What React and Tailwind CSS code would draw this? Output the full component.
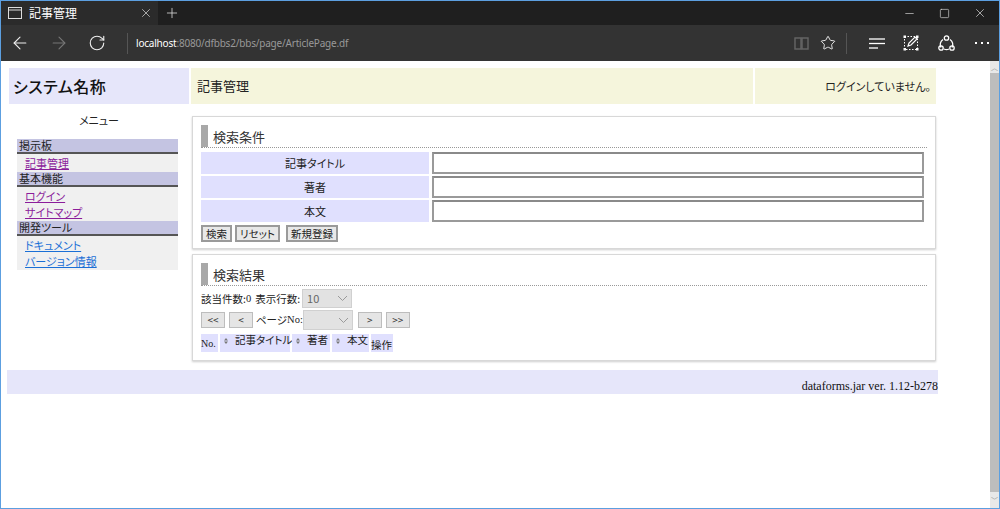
import React from 'react'
import {ArrowLeft, ArrowRight, RotateCw, Star, Minus, Square, X, Plus} from 'lucide-react'

const jp = {fontFamily: '"Noto Sans CJK JP", "Noto Sans", sans-serif'}
const serif = {fontFamily: '"Liberation Serif", serif'}

function Chevron() {
	return (
		<svg width="11" height="7" viewBox="0 0 11 7" className="ml-auto mr-[3px]">
			<path d="M1 1l4.5 4.5L10 1" fill="none" stroke="#9a9a9a" strokeWidth="1" />
		</svg>
	)
}

function SortIcon() {
	return (
		<svg width="4" height="6" viewBox="0 0 4 6" className="ml-[4px] mr-[7px] mt-[4px] shrink-0">
			<path d="M2 0L4 2.4H0z M2 6L4 3.6H0z" fill="#777" />
		</svg>
	)
}

function TitleBar() {
	return (
		<div className="flex h-[24px] bg-[#1f1f1f] text-white">
			<div className="flex items-center w-[157px] bg-[#2b2b2b] pl-[7px]">
				<svg width="14" height="12" viewBox="0 0 14 12">
					<rect x="0.5" y="0.5" width="13" height="11" fill="none" stroke="#ddd" />
					<line x1="0.5" y1="3" x2="13.5" y2="3" stroke="#ddd" />
				</svg>
				<span className="ml-[7px] text-[12px]" style={jp}>記事管理</span>
				<X size={14} strokeWidth={1.2} className="ml-auto mr-[5px] text-[#ddd]" />
			</div>
			<div className="flex items-center pl-[6px]">
				<Plus size={16} strokeWidth={1.2} className="text-[#ddd]" />
			</div>
			<div className="ml-auto flex items-center gap-[23px] pr-[12px] text-[#ddd]">
				<Minus size={13} strokeWidth={1.2} />
				<Square size={11} strokeWidth={1.4} />
				<X size={14} strokeWidth={1.2} />
			</div>
		</div>
	)
}

function ToolBar() {
	return (
		<div className="flex items-center h-[36px] bg-[#333333] text-white">
			<ArrowLeft size={20} strokeWidth={1.3} className="ml-[9px] text-[#eee]" />
			<ArrowRight size={20} strokeWidth={1.3} className="ml-[19px] text-[#777]" />
			<RotateCw size={18} strokeWidth={1.5} className="ml-[19px] text-[#eee]" />
			<div className="ml-[21px] w-px h-[21px] bg-[#555]" />
			<div className="ml-[8px] text-[10px] tracking-[-0.2px]" style={{fontFamily: '"Noto Sans", sans-serif'}}>
				<span className="text-white">localhost</span>
				<span className="text-[#999]">:8080/dfbbs2/bbs/page/ArticlePage.df</span>
			</div>
			<div className="ml-auto flex items-center pr-[10px]">
				<svg width="15" height="13" viewBox="0 0 15 13" className="mr-[11px]">
					<rect x="1" y="1" width="6" height="11" fill="none" stroke="#666" strokeWidth="1.4" />
					<rect x="8" y="1" width="6" height="11" fill="none" stroke="#666" strokeWidth="1.4" />
				</svg>
				<Star size={16} strokeWidth={1.3} className="text-white" />
				<div className="ml-[10px] w-px h-[21px] bg-[#555]" />
				<svg width="16" height="11" viewBox="0 0 16 11" className="ml-[22px]">
					<line x1="0" y1="1" x2="16" y2="1" stroke="#fff" strokeWidth="1.3" />
					<line x1="0" y1="5.5" x2="16" y2="5.5" stroke="#fff" strokeWidth="1.3" />
					<line x1="0" y1="10" x2="9" y2="10" stroke="#fff" strokeWidth="1.3" />
				</svg>
				<svg width="16" height="16" viewBox="0 0 16 16" className="ml-[18px]">
					<rect x="1.5" y="1.5" width="13" height="13" fill="none" stroke="#fff" strokeWidth="1" strokeDasharray="1.5 1.5" />
					<rect x="0.5" y="0.5" width="2.5" height="2.5" fill="#fff" />
					<rect x="13" y="0.5" width="2.5" height="2.5" fill="#fff" />
					<rect x="0.5" y="13" width="2.5" height="2.5" fill="#fff" />
					<rect x="13" y="13" width="2.5" height="2.5" fill="#fff" />
					<path d="M5 11l1-3 6-6 2 2-6 6z" fill="none" stroke="#fff" strokeWidth="1.2" />
				</svg>
				<svg width="17" height="16" viewBox="0 0 17 16" className="ml-[19px]">
					<path d="M5 4.5 A6 6 0 0 0 3 12.5 M6 14 A6 6 0 0 0 11 14 M14 12.5 A6 6 0 0 0 12 4.5" fill="none" stroke="#fff" strokeWidth="1.3" />
					<circle cx="8.5" cy="3" r="2.2" fill="none" stroke="#fff" strokeWidth="1.3" />
					<circle cx="3" cy="13" r="2.2" fill="none" stroke="#fff" strokeWidth="1.3" />
					<circle cx="14" cy="13" r="2.2" fill="none" stroke="#fff" strokeWidth="1.3" />
				</svg>
				<div className="ml-[20px] flex gap-[4px]">
					<span className="w-[2px] h-[2px] bg-white" />
					<span className="w-[2px] h-[2px] bg-white" />
					<span className="w-[2px] h-[2px] bg-white" />
				</div>
			</div>
		</div>
	)
}

function MenuGroup({title, items}) {
	return (
		<div>
			<div className="h-[15px] bg-[#c4c4e2] border-b-2 border-[#555] pl-[2px] text-[11px] leading-[13px] text-[#222]">{title}</div>
			<div className="bg-[#f0f0f0] py-[1px]">
				{items.map((it) => (
					<div key={it.label} className={`h-[16px] leading-[16px] pl-[8px] text-[11px] underline ${it.color}`}>
						{it.label}
					</div>
				))}
			</div>
		</div>
	)
}

function Panel({title, children, className}) {
	return (
		<div className={`bg-white border border-[#d8d8d8] shadow-[0_1px_2px_rgba(0,0,0,0.2)] px-[8px] pt-[8px] ${className}`}>
			<div className="flex items-stretch h-[23px] border-b border-dotted border-[#999]">
				<div className="w-[7px] bg-[#a8a8a8]" />
				<div className="ml-[5px] text-[13px] leading-[23px] text-[#333]">{title}</div>
			</div>
			{children}
		</div>
	)
}

function FormRow({label}) {
	return (
		<div className="flex h-[22px] gap-[3px]">
			<div className="w-[228px] bg-[#e0e0fe] flex items-center justify-center text-[11px] text-[#222]">{label}</div>
			<div className="w-[492px] border-2 border-[#9a9a9a] border-t-[#8a8a8a] bg-white" />
		</div>
	)
}

function Btn({children, className}) {
	return (
		<div className={`h-[17px] px-[3px] border-2 border-[#9a9a9a] bg-[#e8e8e8] text-[10.5px] leading-[13px] text-[#222] ${className}`}>{children}</div>
	)
}

function PagerBtn({children}) {
	return (
		<div className="w-[24px] h-[16px] border border-[#bdbdbd] bg-[#e5e5e5] text-[10px] leading-[14px] text-center text-[#333]">{children}</div>
	)
}

export default function App() {
	return (
		<div className="w-[1000px] h-[509px] flex flex-col border border-[#5c9fe0] overflow-hidden bg-white [font-feature-settings:'palt']" style={jp}>
			<TitleBar />
			<ToolBar />
			<div className="flex flex-1 min-h-0">
				<div className="flex-1 pt-[7px] pl-[6px]">
					{/* ヘッダ */}
					<div className="ml-[2px] flex gap-[2px] h-[36px]">
						<div className="w-[180px] bg-[#e6e6fa] flex items-center pl-[4px] text-[16px] font-medium tracking-[0.5px] text-[#111]">システム名称</div>
						<div className="w-[562px] bg-[#f5f5dc] flex items-center pl-[6px] text-[13px] text-[#222]">記事管理</div>
						<div className="w-[181px] bg-[#f5f5dc] flex items-center justify-end pr-[5px] text-[11px] text-[#222]">ログインしていません。</div>
					</div>
					<div className="ml-[2px] flex gap-[3px]">
						{/* メニュー */}
						<div className="w-[180px]">
							<div className="text-center text-[11px] text-[#222] pt-[8px] h-[35px]">メニュー</div>
							<div className="ml-[8px] w-[161px]">
								<MenuGroup title="掲示板" items={[{label: '記事管理', color: 'text-[#8b1d9b]'}]} />
								<MenuGroup title="基本機能" items={[{label: 'ログイン', color: 'text-[#8b1d9b]'}, {label: 'サイトマップ', color: 'text-[#8b1d9b]'}]} />
								<MenuGroup title="開発ツール" items={[{label: 'ドキュメント', color: 'text-[#1a6fd6]'}, {label: 'バージョン情報', color: 'text-[#1a6fd6]'}]} />
							</div>
						</div>
						{/* メイン */}
						<div className="w-[744px] pt-[12px]">
							<Panel title="検索条件" className="h-[133px]">
								<div className="mt-[4px] flex flex-col gap-[2px]">
									<FormRow label="記事タイトル" />
									<FormRow label="著者" />
									<FormRow label="本文" />
								</div>
								<div className="mt-[3px] flex">
									<Btn>検索</Btn>
									<Btn className="ml-[3px]">リセット</Btn>
									<Btn className="ml-[6px]">新規登録</Btn>
								</div>
							</Panel>
							<Panel title="検索結果" className="mt-[5px] h-[107px]">
								<div className="mt-[3px] flex items-center h-[19px] text-[10.5px] text-[#222]">
									<span>該当件数:</span>
									<span style={serif}>0</span>
									<span className="ml-[4px]">表示行数:</span>
									<div className="ml-[2px] w-[50px] h-[19px] bg-[#e2e2e2] border border-[#d0d0d0] flex items-center pl-[4px] text-[11px] text-[#666]">
										10
										<Chevron />
									</div>
								</div>
								<div className="mt-[2px] flex items-center h-[20px] text-[10.5px] text-[#222]">
									<PagerBtn>&lt;&lt;</PagerBtn>
									<div className="ml-[4px]"><PagerBtn>&lt;</PagerBtn></div>
									<span className="ml-[3px]">ページ</span>
									<span style={serif}>No:</span>
									<div className="w-[50px] h-[20px] bg-[#e2e2e2] border border-[#d0d0d0] flex items-center">
										<Chevron />
									</div>
									<div className="ml-[5px]"><PagerBtn>&gt;</PagerBtn></div>
									<div className="ml-[4px]"><PagerBtn>&gt;&gt;</PagerBtn></div>
								</div>
								<div className="mt-[4px] flex gap-[2px] h-[18px] text-[10.5px] text-[#222] whitespace-nowrap">
									<div className="w-[17px] bg-[#e0e0fe] flex items-end pb-[1px] text-[10px]" style={serif}>No.</div>
									<div className="w-[70px] bg-[#e0e0fe] flex items-start leading-[12px]"><SortIcon />記事タイトル</div>
									<div className="w-[38px] bg-[#e0e0fe] flex items-start leading-[12px]"><SortIcon />著者</div>
									<div className="w-[37px] bg-[#e0e0fe] flex items-start leading-[12px]"><SortIcon />本文</div>
									<div className="w-[22px] bg-[#e0e0fe] flex items-end leading-[14px]">操作</div>
								</div>
							</Panel>
						</div>
					</div>
					{/* フッタ */}
					<div className="mt-[9px] w-[931px] h-[24px] bg-[#e6e6fa] flex items-end justify-end text-[12px] leading-[15px] text-[#111]" style={serif}>
						dataforms.jar ver. 1.12-b278
					</div>
				</div>
				{/* スクロールバー */}
				<div className="w-[9px] flex flex-col bg-[#e8e8e8]">
					<div className="h-[12px] flex items-center justify-center text-[7px] text-[#999]">︿</div>
					<div className="flex-1 bg-[#bdbdbd]" />
					<div className="h-[16px] flex items-center justify-center text-[7px] text-[#999]">﹀</div>
				</div>
			</div>
		</div>
	)
}
